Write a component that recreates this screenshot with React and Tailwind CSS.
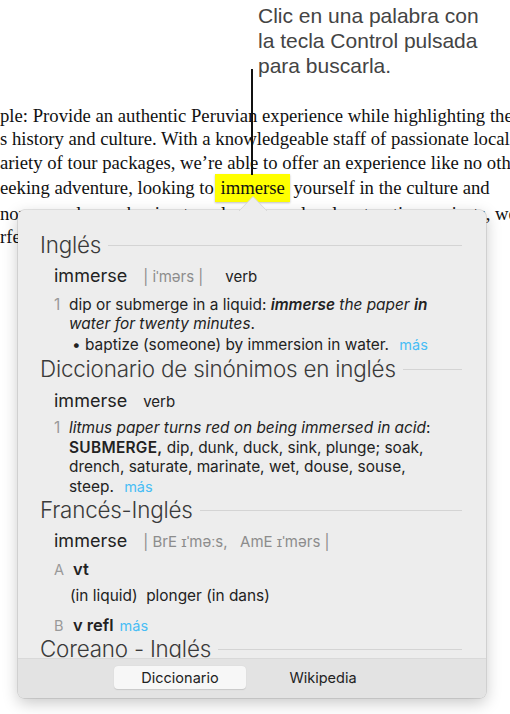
import React from 'react';

const sans = "font-['Inter','Liberation_Sans',sans-serif]";

const Header = ({ children, className = '' }) => (
  <div className={`flex items-center h-[28px] ${className}`}>
    <span className="text-[22.4px] leading-[28px] font-light text-[#3a3a3a] whitespace-nowrap tracking-[-0.2px]">
      {children}
    </span>
    <div className="flex-1 h-px bg-[#d4d4d4] ml-[7px] mr-[24px]" />
  </div>
);

const Mas = () => <span className="text-[#48bdf5] text-[14.5px] ml-[6px]">más</span>;

const Popover = () => (
  <div className="absolute left-[18px] top-[210px] w-[468px] h-[488px] rounded-[6px] bg-[#ededed] shadow-[0_0_0_0.5px_rgba(0,0,0,0.18),0_5px_16px_rgba(0,0,0,0.22)] flex flex-col overflow-hidden">
    <div className={`h-[448px] overflow-hidden pl-[22px] pt-[21px] text-[#222] ${sans}`}>
      <Header>Inglés</Header>

      <div className="mt-[5px] h-[24px] pl-[14px] flex items-baseline">
        <span className="text-[18px] leading-[24px]">immerse</span>
        <span className="ml-[16px] text-[15px] text-[#8c8c8c]">| iˈmərs |</span>
        <span className="ml-[22px] text-[15px]">verb</span>
      </div>

      <div className="mt-[7px] pl-[14px] text-[15.4px] leading-[19px] flex">
        <span className="w-[15px] text-[#999]">1</span>
        <div className="flex-1 pr-[45px]">
          dip or submerge in a liquid: <b className="italic font-semibold">immerse</b> <i>the paper</i> <b className="italic font-semibold">in</b>{' '}
          <i>water for twenty minutes</i>.
        </div>
      </div>
      <div className="mt-[2px] pl-[32px] text-[15.4px] leading-[19px] whitespace-nowrap">
        • baptize (someone) by immersion in water. <Mas />
      </div>

      <Header className="mt-[1px]">Diccionario de sinónimos en inglés</Header>

      <div className="mt-[6px] h-[24px] pl-[14px] flex items-baseline">
        <span className="text-[18px] leading-[24px]">immerse</span>
        <span className="ml-[16px] text-[15px]">verb</span>
      </div>

      <div className="mt-[5px] pl-[14px] text-[15.4px] leading-[19.6px] flex">
        <span className="w-[15px] text-[#999]">1</span>
        <div className="flex-1 pr-[45px]">
          <i>litmus paper turns red on being immersed in acid</i>:{' '}
          <span className="font-semibold tracking-[0.3px]">SUBMERGE,</span> dip, dunk, duck, sink, plunge; soak, drench,
          saturate, marinate, wet, douse, souse, steep. <Mas />
        </div>
      </div>

      <Header>Francés-Inglés</Header>

      <div className="mt-[5px] h-[24px] pl-[14px] flex items-baseline">
        <span className="text-[18px] leading-[24px]">immerse</span>
        <span className="ml-[16px] text-[15px] text-[#8c8c8c] whitespace-pre">| BrE ɪˈməːs,   AmE ɪˈmərs |</span>
      </div>

      <div className="mt-[4px] h-[20px] pl-[14px] flex items-baseline">
        <span className="w-[19px] text-[14.5px] text-[#999]">A</span>
        <span className="text-[16.5px] font-semibold">vt</span>
      </div>
      <div className="mt-[9px] h-[20px] pl-[30px] text-[15.4px] leading-[20px] whitespace-pre">
        (in liquid)  plonger (in dans)
      </div>
      <div className="mt-[7px] h-[20px] pl-[14px] flex items-baseline">
        <span className="w-[19px] text-[14.5px] text-[#999]">B</span>
        <span className="text-[16.5px] font-semibold">v refl</span>
        <Mas />
      </div>

      <Header className="mt-[2px]">Coreano - Inglés</Header>
    </div>
    <div className={`h-[40px] bg-[#e3e3e3] border-t border-[#d9d9d9] flex items-start pt-[7px] pl-[96px] gap-[11px] ${sans}`}>
      <div className="w-[132px] h-[23px] rounded-[4px] bg-[#f7f7f7] shadow-[0_0.5px_1px_rgba(0,0,0,0.12)] flex items-center justify-center text-[14.5px] text-[#222]">
        Diccionario
      </div>
      <div className="w-[132px] h-[23px] flex items-center justify-center text-[14.5px] text-[#222]">
        Wikipedia
      </div>
    </div>
  </div>
);

export default function App() {
  return (
    <div className="relative w-[510px] h-[714px] bg-white overflow-hidden">
      <div className="pl-[258px] pt-[3px] font-['Liberation_Sans',Arial,sans-serif] text-[21px] leading-[25px] text-[#444]">
        <div>Clic en una palabra con</div>
        <div>la tecla Control pulsada</div>
        <div>para buscarla.</div>
      </div>

      <div className="mt-[26px] font-['Liberation_Serif','Times_New_Roman',serif] text-[18.7px] leading-[23.3px] text-[#111] whitespace-nowrap">
        <div>ple: Provide an authentic Peruvian experience while highlighting the</div>
        <div>s history and culture. With a knowledgeable staff of passionate local</div>
        <div>ariety of tour packages, we’re able to offer an experience like no other</div>
        <div>
          eeking adventure, looking to{' '}
          <span className="inline-block bg-[#ffff00] px-[5px] -ml-[3px] -mr-[1px] leading-[28px] shadow-[0_1px_2px_rgba(0,0,0,0.25)]">immerse</span>{' '}
          yourself in the culture and
        </div>
        <div>nous peoples, or hoping to volunteer on local restoration projects, we</div>
        <div>rfect</div>
      </div>

      <div className="absolute left-[251px] top-[69px] w-[2px] h-[106px] bg-[#111]" />

      <Popover />

      <svg className="absolute left-[239px] top-[196px]" width="28" height="16" viewBox="0 0 28 16">
        <polygon points="0,15.5 14,0.5 28,15.5" fill="#ededed" />
        <polyline points="0,15 14,0.5 28,15" fill="none" stroke="#d8d8d8" strokeWidth="1" />
      </svg>
    </div>
  );
}
